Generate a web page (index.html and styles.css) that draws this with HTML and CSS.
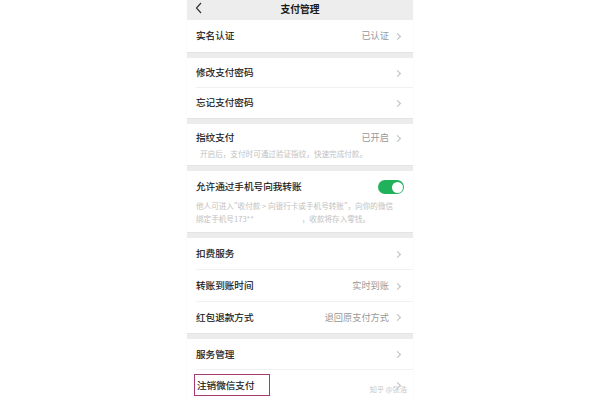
FILE: index.html
```html
<!DOCTYPE html>
<html lang="zh-CN">
<head>
<meta charset="utf-8">
<title>支付管理</title>
<link rel="stylesheet" href="styles.css">
</head>
<body>
<div class="phone">
  <div class="header">
    <svg class="back" width="8" height="12" viewBox="0 0 8 12"><path d="M6 1 L1.5 6 L6 11" fill="none" stroke="#333" stroke-width="1.2"/></svg>
    <span class="title">支付管理</span>
  </div>

  <div class="group">
    <div class="row r32"><span class="label">实名认证</span><span class="value">已认证</span><i class="chev"></i></div>
  </div>
  <div class="sep"></div>

  <div class="group">
    <div class="row r30 line"><span class="label">修改支付密码</span><i class="chev"></i></div>
    <div class="row r30"><span class="label">忘记支付密码</span><i class="chev"></i></div>
  </div>
  <div class="sep"></div>

  <div class="group">
    <div class="block fp">
      <div class="top"><span class="label">指纹支付</span><span class="value">已开启</span><i class="chev"></i></div>
      <p class="sub">开启后，支付时可通过验证指纹，快速完成付款。</p>
    </div>
  </div>
  <div class="sep"></div>

  <div class="group">
    <div class="block tr">
      <div class="top"><span class="label">允许通过手机号向我转账</span><span class="toggle"><span class="knob"></span></span></div>
      <p class="sub">他人可进入"收付款 &gt; 向银行卡或手机号转账"，向你的微信<br>绑定手机号173**<span class="mask"></span>，收款将存入零钱。</p>
    </div>
  </div>
  <div class="sep"></div>

  <div class="group">
    <div class="row r32 line"><span class="label">扣费服务</span><i class="chev"></i></div>
    <div class="row r32 line"><span class="label">转账到账时间</span><span class="value">实时到账</span><i class="chev"></i></div>
    <div class="row r31"><span class="label">红包退款方式</span><span class="value">退回原支付方式</span><i class="chev"></i></div>
  </div>
  <div class="sep"></div>

  <div class="group">
    <div class="row r31 line"><span class="label">服务管理</span><i class="chev"></i></div>
    <div class="row r30"><span class="label boxed">注销微信支付</span><i class="chev"></i></div>
  </div>
  <span class="watermark">知乎 @张浩</span>
</div>
</body>
</html>
```

FILE: styles.css
```css
html, body {
  margin: 0;
  padding: 0;
  background: #ffffff;
}
body {
  font-family: "Noto Sans CJK SC", "Noto Sans", sans-serif;
  color: #1f1f1f;
}
.phone {
  position: relative;
  width: 226px;
  height: 400px;
  margin: 0 auto;
  background: #ffffff;
  overflow: hidden;
  box-shadow: 0 0 1px rgba(0,0,0,0.08);
}
.header {
  position: relative;
  height: 20px;
  background: #ededed;
  display: flex;
  align-items: center;
  justify-content: center;
}
.back {
  position: absolute;
  left: 8px;
  top: 2px;
}
.title {
  font-size: 9.8px;
  font-weight: 700;
  color: #1a1a1a;
  line-height: 1;
}
.group {
  background: #fff;
}
.sep {
  height: 6px;
  background: #ececec;
  border-top: 1px solid #e4e4e4;
  box-sizing: border-box;
}
.row {
  display: flex;
  align-items: center;
  padding: 0 9px 0 9px;
  position: relative;
}
.r30 { height: 30px; }
.r31 { height: 31px; }
.r32 { height: 32px; }
.line::after {
  content: "";
  position: absolute;
  left: 9px;
  right: 0;
  bottom: 0;
  border-bottom: 1px solid #f1f1f1;
}
.label {
  font-size: 9.6px;
  color: #141414;
  line-height: 1;
  flex: 1;
  white-space: nowrap;
  -webkit-text-stroke: 0.15px #141414;
}
.value {
  font-size: 9.2px;
  color: #999999;
  line-height: 1;
  margin-right: 6px;
  white-space: nowrap;
}
.chev {
  width: 4px;
  height: 4px;
  border-top: 1px solid #bdbdbd;
  border-right: 1px solid #bdbdbd;
  transform: rotate(45deg);
  margin-right: 4px;
  flex: none;
}
.block {
  padding: 0 9px;
}
.block .top {
  display: flex;
  align-items: center;
}
.fp {
  height: 41px;
  padding-top: 9px;
  box-sizing: border-box;
}
.fp .top { height: 10px; }
.tr {
  height: 61px;
  padding-top: 9px;
  box-sizing: border-box;
}
.tr .top { height: 14px; }
.sub {
  margin: 0;
  font-size: 7.6px;
  line-height: 13px;
  color: #c2c2c2;
  padding-left: 4px;
  white-space: nowrap;
}
.fp .sub { margin-top: 4px; }
.tr .sub { margin-top: 5px; padding-left: 0; }
.mask {
  display: inline-block;
  width: 48px;
}
.toggle {
  width: 26px;
  height: 14px;
  border-radius: 7px;
  background: #1fb25a;
  position: relative;
  flex: none;
  margin-right: 0;
}
.knob {
  position: absolute;
  right: 1.5px;
  top: 1.5px;
  width: 11px;
  height: 11px;
  border-radius: 50%;
  background: #fff;
}
.boxed {
  flex: 0 0 auto;
  margin-left: -2px;
  padding: 6px 14px 5px 2px;
  border: 1.5px solid #a63a73;
  width: 58px;
}
.row .boxed + .chev { margin-left: auto; }
.watermark {
  position: absolute;
  right: 6px;
  bottom: 7px;
  font-size: 7.2px;
  color: #c8c8c8;
  line-height: 1;
}
```
